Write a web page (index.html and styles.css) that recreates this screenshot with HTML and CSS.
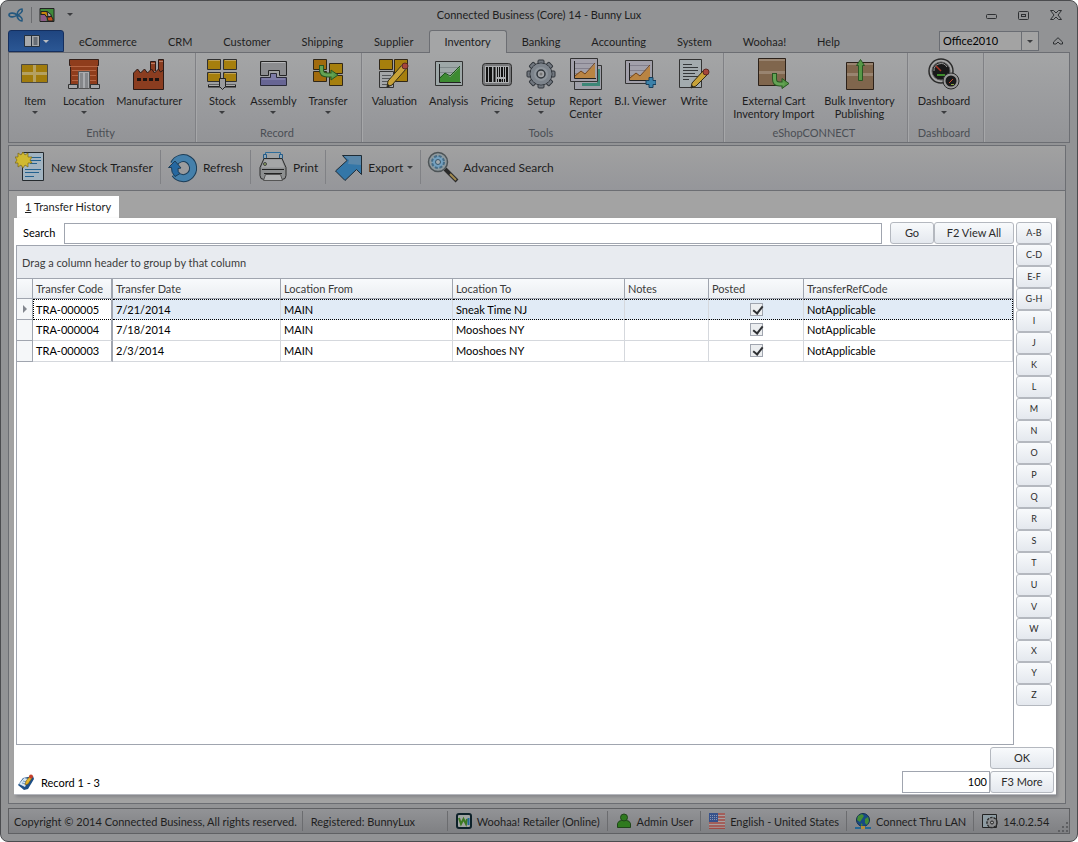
FILE: index.html
```html
<!DOCTYPE html>
<html lang="en">
<head>
<meta charset="UTF-8">
<meta name="viewport" content="width=device-width, initial-scale=1.0">
<title>Connected Business (Core) 14 - Bunny Lux</title>
<link rel="stylesheet" href="styles.css">
</head>
<body>
<div class="window">

  <!-- Title bar -->
  <header class="titlebar">
    <div class="quick">
      <svg class="logo" width="16" height="16" viewBox="0 0 16 16" fill="none" stroke="#24587f" stroke-width="1.6"><path d="M9 8C6 5 1 6 1 8s5 3 8 0zM9 8c0-4 3-6 5-6 1 2-1 5-5 6zM9 8c0 4 3 6 5 6 1-2-1-5-5-6z"/></svg>
      <span class="quick-sep"></span>
      <svg width="16" height="16" viewBox="0 0 16 16"><path fill="#3f8a3a" stroke="#222" d="M1 1.500h14v13H1z"/><path fill="#8a5a86" d="M1.500 8h6v6h-6z"/><path fill="#c8860a" stroke="#222" d="M2 4.500h6l2 5h-3l-1-2H2z"/><path fill="#c2521a" stroke="#222" d="M8 10h3V7l3 5v2H9z"/><path fill="#aaa" stroke="#222" d="M8 4.500l4 3v2H9z"/></svg>
      <span class="arrow"></span>
    </div>
    <h1>Connected Business (Core) 14 - Bunny Lux</h1>
    <div class="window-buttons">
      <button aria-label="Minimize"><svg width="12" height="12" viewBox="0 0 12 12"><rect x=".5" y="5.500" width="10" height="4" rx="1" fill="none" stroke="#2e3033"/></svg></button>
      <button aria-label="Restore"><svg width="12" height="12" viewBox="0 0 12 12" fill="none" stroke="#2e3033"><rect x=".5" y="2.500" width="10" height="8" rx="1"/><rect x="3.500" y="5.500" width="4" height="2"/></svg></button>
      <button aria-label="Close"><svg width="12" height="12" viewBox="0 0 12 12" fill="none" stroke="#2e3033"><path d="M.5 1.500h3L6 4l2.500-2.500h3L8 6l3.500 4.500h-3L6 8l-2.500 2.500h-3L4 6z"/></svg></button>
    </div>
  </header>

  <!-- Menu tabs -->
  <nav class="menu">
    <button class="file" aria-label="File">
      <svg width="16" height="12" viewBox="0 0 16 12"><path fill="#a8aaac" stroke="#26303c" d="M.5.500h15v11H.5z"/><path stroke="#26303c" d="M7.500 0v12M9.500 3h4M9.500 5h4M9.500 7h4M9.500 9h4"/></svg>
      <span class="arrow light"></span>
    </button>
    <a href="#">eCommerce</a>
    <a href="#">CRM</a>
    <a href="#">Customer</a>
    <a href="#">Shipping</a>
    <a href="#">Supplier</a>
    <a href="#" class="active">Inventory</a>
    <a href="#">Banking</a>
    <a href="#">Accounting</a>
    <a href="#">System</a>
    <a href="#">Woohaa!</a>
    <a href="#">Help</a>
    <div class="skin">
      <select aria-label="Skin"><option>Office2010</option></select>
      <span class="skin-arrow"><span class="arrow"></span></span>
    </div>
    <button class="collapse" aria-label="Collapse ribbon"><svg width="10" height="8" viewBox="0 0 10 8" fill="none" stroke="#2e3033"><path d="M.5 5L5 .7 9.500 5v2H7L5 5 3 7H.5z"/></svg></button>
  </nav>

  <!-- Ribbon -->
  <section class="ribbon">
    <div class="group">
      <div class="items">
        <button class="item">
          <svg width="32" height="32" viewBox="0 0 32 32"><path fill="#a17c0c" stroke="#4b4a45" d="M2.500 6.500h26v18h-26z"/><path stroke="#b4a162" stroke-width="3" d="M3 15.500h25M15.500 7v17"/></svg>
          <span>Item</span><i class="arrow"></i>
        </button>
        <button class="item">
          <svg width="32" height="32" viewBox="0 0 32 32"><path fill="#8f3d1c" stroke="#33201a" d="M1.500 1.500h29v6h-1v19h-27v-19h-1z"/><path stroke="#b66543" d="M2 8.500h28M4 12.500h24M4 17.500h24M4 22.500h24"/><path fill="#a9abae" stroke="#555" d="M10.500 30.500v-17h11v17z"/><path fill="#85878a" d="M12 15h3v15h-3zM17 15h3v15h-3z"/><path fill="#a5a6a8" stroke="#333" d="M.5 26.500h9v4h-9zM22.500 26.500h9v4h-9z"/></svg>
          <span>Location</span><i class="arrow"></i>
        </button>
        <button class="item">
          <svg width="32" height="32" viewBox="0 0 32 32"><path fill="#8b3d20" stroke="#2b1a16" d="M17.500 15V3.500h5V13M25.500 14V1.500h5V14"/><path stroke="#b77b62" d="M18 5.500h4M26 3.500h4"/><path fill="#8b3d20" stroke="#2b1a16" d="M.5 31.500V15l4-4 3 4 4-4 3 4 4-4 3 4 4-4 2 3 3-2v19.500z"/><path fill="#1c1310" d="M4 20h4v3H4zM10 20h4v3h-4zM16 20h4v3h-4zM22 20h4v3h-4z"/></svg>
          <span>Manufacturer</span>
        </button>
      </div>
      <h2>Entity</h2>
    </div>

    <div class="group">
      <div class="items">
        <button class="item">
          <svg width="32" height="32" viewBox="0 0 32 32"><path fill="#a67f0d" stroke="#303030" d="M1.500 1.500h13v10h-13zM17.500 1.500h13v10h-13zM1.500 14.500h13v9h-13zM17.500 14.500h13v9h-13z"/><path stroke="#c0a356" d="M3 2.500h11M19 2.500h11M3 15.500h11M19 15.500h11"/><path stroke="#202020" stroke-width="3" d="M2 28h28"/><path stroke="#aaa" d="M3 27.500h26"/><path fill="#999a9d" stroke="#222" d="M13.500 20.500h6v8l-3 3-3-3z"/></svg>
          <span>Stock</span><i class="arrow"></i>
        </button>
        <button class="item">
          <svg width="32" height="32" viewBox="0 0 32 32"><path fill="#8b8c8f" stroke="#242424" d="M3.500 3.500h26v14h-7v-5h-11v5h-8z"/><path stroke="#b6b7b9" d="M5 4.500h23"/><path fill="#676594" stroke="#292938" d="M3.500 19.500h10v-4h6v4h10v8h-26z"/><path fill="#7d7ba7" d="M5 20h9v-4h5v4h9v2H5z"/></svg>
          <span>Assembly</span><i class="arrow"></i>
        </button>
        <button class="item">
          <svg width="32" height="32" viewBox="0 0 32 32"><path fill="#a16b0d" stroke="#302718" d="M1.500 1.500h13v10h-13zM1.500 13.500h13v10h-13z"/><path fill="#a67f0d" stroke="#302718" d="M17.500 5.500h13v10h-13zM17.500 17.500h13v10h-13z"/><path fill="none" stroke="#285723" stroke-width="5" d="M9.500 7v5q0 5 6 5h5"/><path fill="#579847" stroke="#285723" d="M19 12l7 5-7 5z"/><path fill="none" stroke="#64a354" stroke-width="3" d="M9.500 8v4q0 5 6 5h6"/></svg>
          <span>Transfer</span><i class="arrow"></i>
        </button>
      </div>
      <h2>Record</h2>
    </div>

    <div class="group">
      <div class="items">
        <button class="item">
          <svg width="32" height="32" viewBox="0 0 32 32"><path fill="#a67f0d" stroke="#302718" d="M1.500 1.500h13v10h-13zM16.500 1.500h13v22h-13z"/><path fill="#a5a7a9" stroke="#333" d="M1.500 13.500h14v16h-14z"/><path stroke="#54575a" d="M4 17.500h9M4 20.500h9M4 23.500h6M4 26.500h5"/><path fill="#c8a238" stroke="#332c15" d="M10 23L24 7l4 4-14 16-5 2z"/><path fill="#888" d="M23 8l4 4 1-1-4-4z"/><circle cx="27" cy="8" r="3" fill="#a7463c" stroke="#5c2922"/><path fill="#222" d="M9 29l1-3 2 2z"/></svg>
          <span>Valuation</span>
        </button>
        <button class="item">
          <svg width="32" height="32" viewBox="0 0 32 32"><path fill="#9ea8a8" stroke="#333" d="M2.500 3.500h27v24h-27z"/><path stroke="#7f898a" d="M6 9.500h21M6 14.500h21M6 19.500h21"/><path fill="#3d8b32" d="M7 24v-5l5-4 5 4 10-10v15z"/><path fill="none" stroke="#1d571a" d="M7 20l5-5 5 3 10-10"/><path stroke="#222" fill="none" d="M6.500 6v18.500H28"/></svg>
          <span>Analysis</span>
        </button>
        <button class="item">
          <svg width="32" height="32" viewBox="0 0 32 32"><rect x="1.500" y="5.500" width="29" height="22" rx="3" fill="#77787a" stroke="#2c2c2c"/><path fill="#aeb0b2" d="M4 8h24v17H4z"/><path stroke="#111" stroke-width="2" d="M6 9v15M10 9v15M13.500 9v15M21 9v10M26 9v15"/><path stroke="#111" d="M8.500 9v15M16.500 9v10M18.500 9v10M23.500 9v10M16.500 21v3M18 21.500h2v2h-2M21.500 21v3M23.500 21v3"/></svg>
          <span>Pricing</span><i class="arrow"></i>
        </button>
        <button class="item">
          <svg width="32" height="32" viewBox="0 0 32 32"><g transform="translate(16 16)"><g fill="#71777f" stroke="#30353b"><rect x="-3" y="-14" width="6" height="28" rx="1"/><rect x="-3" y="-14" width="6" height="28" rx="1" transform="rotate(45)"/><rect x="-3" y="-14" width="6" height="28" rx="1" transform="rotate(90)"/><rect x="-3" y="-14" width="6" height="28" rx="1" transform="rotate(135)"/><circle r="11"/></g><circle r="10.500" fill="#7d848c"/><circle r="7" fill="#8d949b"/><circle r="4" fill="#a3a5a8" stroke="#30353b" stroke-width="1.500"/><circle r="1.500" fill="#777"/></g></svg>
          <span>Setup</span><i class="arrow"></i>
        </button>
        <button class="item">
          <svg width="32" height="32" viewBox="0 0 32 32"><path fill="#9fa0a9" stroke="#333" d="M4.500 7.500h27v24h-27z"/><path fill="#3d8778" d="M27 11h3v17H12v-3h15z"/><path fill="#a2a0aa" stroke="#333" d="M.5.500h27v23H.5z"/><path stroke="#827f8c" d="M4 5.500h21M4 10.500h21M4 15.500h21"/><path fill="#b98443" d="M5 20v-3l6-4 4 3L25 6v14z"/><path fill="none" stroke="#71441c" d="M5 18l6-5 4 3L25 5"/><path fill="none" stroke="#222" d="M4.500 3v17.500H26"/></svg>
          <span>Report<br>Center</span>
        </button>
        <button class="item">
          <svg width="32" height="32" viewBox="0 0 32 32"><path fill="#a2a0aa" stroke="#333" d="M1.500 2.500h27v23h-27z"/><path stroke="#827f8c" d="M5 7.500h21M5 12.500h21M5 17.500h21"/><path fill="#b98443" d="M6 22v-3l6-4 4 3L26 8v14z"/><path fill="none" stroke="#71441c" d="M6 20l6-5 4 3L26 7"/><path fill="none" stroke="#222" d="M5.500 5v17.500H27"/><path fill="#3c82aa" stroke="#183f5c" d="M25 19.500h4v3h3v4h-3v3h-4v-3h-3v-4h3z"/></svg>
          <span>B.I. Viewer</span>
        </button>
        <button class="item">
          <svg width="32" height="32" viewBox="0 0 32 32"><path fill="#a3abae" stroke="#333" d="M1.500 1.500h22v28h-22z"/><path stroke="#34383a" d="M5 6.500h9M5 9.500h15M5 12.500h15M5 15.500h12M5 18.500h15M5 21.500h6"/><path fill="#c8a238" stroke="#332c15" d="M14 25l11-12 4 4-11 11-5 2z"/><circle cx="28" cy="14" r="3" fill="#a7463c" stroke="#5c2922"/><path fill="#222" d="M13 30l1-3 2 2z"/></svg>
          <span>Write</span>
        </button>
      </div>
      <h2>Tools</h2>
    </div>

    <div class="group shop">
      <div class="items">
        <button class="item">
          <svg width="32" height="32" viewBox="0 0 32 32"><path fill="#80664d" stroke="#2c2119" d="M.5.500h27v27H.5z"/><path fill="#998470" d="M1 13h26v3H1zM1 1h26v2H1z"/><path fill="none" stroke="#285723" stroke-width="5" d="M16.500 15v6q0 5 5 5h4"/><path fill="#579847" stroke="#285723" d="M24 20.500l7 5-7 5z"/><path fill="none" stroke="#64a354" stroke-width="3" d="M16.500 16v5q0 5 5 5h5"/></svg>
          <span>External Cart<br>Inventory Import</span>
        </button>
        <button class="item">
          <svg width="32" height="32" viewBox="0 0 32 32"><path fill="#80664d" stroke="#2c2119" d="M2.500 4.500h27v27h-27z"/><path fill="#998470" d="M3 15h26v3H3zM3 5h26v2H3z"/><path fill="#579847" stroke="#285723" d="M16.500 1.500l4 6h-2v15h-4v-15h-2z"/></svg>
          <span>Bulk Inventory<br>Publishing</span>
        </button>
      </div>
      <h2>eShopCONNECT</h2>
    </div>

    <div class="group">
      <div class="items">
        <button class="item">
          <svg width="32" height="32" viewBox="0 0 32 32"><circle cx="13" cy="13" r="12" fill="#a5a5a5" stroke="#2b2b2b" stroke-width="1.500"/><circle cx="13" cy="13" r="9" fill="#191919" stroke="#555"/><path fill="none" stroke="#999" d="M6 13a7 7 0 0 1 13-4"/><path stroke="#a93424" stroke-width="1.500" d="M8 8l5 5"/><path stroke="#3e8c2b" stroke-width="2" d="M9 17h8"/><circle cx="23" cy="23" r="8" fill="#999" stroke="#2b2b2b"/><circle cx="23" cy="23" r="5.500" fill="#191919"/><path stroke="#c24b2d" d="M21 25l4-4"/><path stroke="#88a43e" d="M23 26.500h3"/></svg>
          <span>Dashboard</span><i class="arrow"></i>
        </button>
      </div>
      <h2>Dashboard</h2>
    </div>
  </section>

  <main class="workspace">
    <div class="toolbar">
      <button class="tool">
        <svg width="32" height="32" viewBox="0 0 32 32"><path fill="#a2b4c1" stroke="#252a2e" d="M7.500 1.500h21v28h-21z"/><path stroke="#22618f" d="M15 6.500h11M15 9.500h11M15 12.500h7M10 18.500h16M10 21.500h14M10 25.500h9"/><path fill="#d0b931" stroke="#7c6710" stroke-width=".7" d="M8 1l2 3 3-2v4l4 0-2 3 2 3-4 0v4l-3-2-2 3-2-3-3 2v-4l-3 0 2-3-2-3 3 0V2l3 2z"/></svg>
        New Stock Transfer
      </button>
      <button class="tool">
        <svg width="32" height="32" viewBox="0 0 32 32"><path fill="none" stroke="#1c3d58" stroke-width="8" d="M8 23A10 10 0 1 0 7 13"/><path fill="none" stroke="#4580ab" stroke-width="6" d="M8 23A10 10 0 1 0 7 13"/><path fill="#2668a0" stroke="#1c3d58" d="M1.500 16.500L8 10l6 7-3 .5q-.5 4 2 5l-5 3q-4-4-3.500-9z"/></svg>
        Refresh
      </button>
      <button class="tool">
        <svg width="32" height="32" viewBox="0 0 32 32"><path fill="#9fa3a6" stroke="#2e6d9b" d="M8.500 10V1.500h15V10z"/><path fill="#8fa5b4" stroke="#245b87" d="M6.500 3.500h3v4h-3zM22.500 3.500h3v4h-3z"/><path fill="#8d8f90" stroke="#2b2b2b" d="M7 7.500h18l4 9v8q0 4-4 4H7q-4 0-4-4v-8z"/><path fill="#a5a6a7" d="M7.500 8.500h17l3 8h-23z"/><circle cx="8" cy="13" r="1.500" fill="#8aa25e" stroke="#444"/><path stroke="#222" d="M5 18.500h22M7 22.500h18"/><path fill="#b0b1b2" stroke="#555" d="M8.500 23.500h15l2 6h-19z"/></svg>
        Print
      </button>
      <button class="tool">
        <svg width="32" height="32" viewBox="0 0 32 32"><path fill="#3477a8" stroke="#1f2c36" d="M10.500 4.500h19v19l-5-5L13 29.500 3.500 20 15 9.500z"/><path fill="#5a87a9" d="M12 5h17v9l-13-1 1-4z"/></svg>
        Export <i class="arrow"></i>
      </button>
      <button class="tool">
        <svg width="32" height="32" viewBox="0 0 32 32"><path stroke="#2b2b2b" stroke-width="4" d="M18 18l12 12"/><path stroke="#a18a50" stroke-width="2" d="M23 23l6 6"/><circle cx="11" cy="11" r="9.500" fill="#8e999e" stroke="#4d5457" stroke-width="1.500"/><circle cx="11" cy="11" r="6" fill="#73a0bf" stroke="#466c86" stroke-width="2" stroke-dasharray="3 1.700"/><circle cx="11" cy="11" r="2.500" fill="#a4acb0" stroke="#39566b"/></svg>
        Advanced Search
      </button>
    </div>

    <a href="#" class="page-tab"><u>1</u> Transfer History</a>

    <div class="page">
      <div class="list">
        <div class="search">
          <label for="search-input">Search</label>
          <input type="text" id="search-input">
          <button class="btn go">Go</button>
          <button class="btn view-all">F2 View All</button>
        </div>

        <div class="grid">
          <div class="group-by">Drag a column header to group by that column</div>
          <table>
            <colgroup>
              <col class="c-mark"><col class="c-code"><col class="c-date"><col class="c-from"><col class="c-to"><col class="c-notes"><col class="c-posted"><col>
            </colgroup>
            <thead>
              <tr><th></th><th>Transfer Code</th><th>Transfer Date</th><th>Location From</th><th>Location To</th><th>Notes</th><th>Posted</th><th>TransferRefCode</th></tr>
            </thead>
            <tbody>
              <tr class="selected"><td><span class="marker"></span></td><td>TRA-000005</td><td>7/21/2014</td><td>MAIN</td><td>Sneak Time NJ</td><td></td><td><input type="checkbox" aria-label="Posted" checked></td><td>NotApplicable</td></tr>
              <tr><td></td><td>TRA-000004</td><td>7/18/2014</td><td>MAIN</td><td>Mooshoes NY</td><td></td><td><input type="checkbox" aria-label="Posted" checked></td><td>NotApplicable</td></tr>
              <tr><td></td><td>TRA-000003</td><td>2/3/2014</td><td>MAIN</td><td>Mooshoes NY</td><td></td><td><input type="checkbox" aria-label="Posted" checked></td><td>NotApplicable</td></tr>
            </tbody>
          </table>
        </div>
      </div>

      <div class="letters">
        <button class="btn">A-B</button>
        <button class="btn">C-D</button>
        <button class="btn">E-F</button>
        <button class="btn">G-H</button>
        <button class="btn">I</button>
        <button class="btn">J</button>
        <button class="btn">K</button>
        <button class="btn">L</button>
        <button class="btn">M</button>
        <button class="btn">N</button>
        <button class="btn">O</button>
        <button class="btn">P</button>
        <button class="btn">Q</button>
        <button class="btn">R</button>
        <button class="btn">S</button>
        <button class="btn">T</button>
        <button class="btn">U</button>
        <button class="btn">V</button>
        <button class="btn">W</button>
        <button class="btn">X</button>
        <button class="btn">Y</button>
        <button class="btn">Z</button>
      </div>

      <div class="footer">
        <div class="record">
          <svg width="16" height="16" viewBox="0 0 16 16"><path fill="#1d4f86" d="M0 11l5-7 10-2 1 3-6 10-4 1z"/><path fill="#d7e7f4" d="M1 10l5-6 5 1-4 8z"/><path stroke="#6f9cc4" d="M4 9l4 1M5 7l4 1"/><path fill="#e5b52a" stroke="#6b541a" stroke-width=".6" d="M7 11l1-4 4-5 2 2-4 6z"/><circle cx="13" cy="2.500" r="2" fill="#c5402c"/></svg>
          <span>Record 1 - 3</span>
        </div>
        <div class="footer-actions">
          <button class="btn">OK</button>
          <div class="more">
            <input type="text" value="100" aria-label="Record count">
            <button class="btn">F3 More</button>
          </div>
        </div>
      </div>
    </div>
  </main>

  <!-- Status bar -->
  <footer class="status">
    <span class="cell copyright">Copyright © 2014 Connected Business, All rights reserved.</span>
    <span class="cell registered">Registered: BunnyLux</span>
    <span class="cell">
      <svg width="16" height="16" viewBox="0 0 16 16"><rect x="1" y="1" width="14" height="14" rx="2" fill="#a0a5a3" stroke="#0d2129" stroke-width="2"/><path fill="none" stroke="#3c7a22" stroke-width="2" d="M3 5l2 6 2.500-5L10 11l1-5"/><path stroke="#1f6a96" stroke-width="2" d="M12.500 5v7"/></svg>
      Woohaa! Retailer (Online)
    </span>
    <span class="cell">
      <svg width="16" height="16" viewBox="0 0 16 16" fill="#2f7a1e" stroke="#20451a"><path d="M1.500 14.500v-4q1-3 4-3h5q3 0 4 3v4z"/><circle cx="8" cy="4.500" r="3.500"/></svg>
      Admin User
    </span>
    <span class="cell">
      <svg width="16" height="16" viewBox="0 0 16 16"><path fill="#a5a0a0" d="M0 0h16v16H0z"/><path stroke="#a14a44" stroke-width="1.500" d="M0 1h16M0 4h16M0 7h16M0 10h16M0 13h16M0 15.500h16"/><path fill="#36518b" d="M0 0h9v9H0z"/><path stroke="#8995b3" stroke-dasharray="1 1" d="M1 2.500h7M1 4.500h7M1 6.500h7"/></svg>
      English - United States
    </span>
    <span class="cell">
      <svg width="16" height="16" viewBox="0 0 16 16"><circle cx="8" cy="7" r="6.500" fill="#174a85" stroke="#122f4e"/><path fill="#438c35" d="M3 3l4-2 2 2-2 3-2 3-3-2zM10 6l3-2 1 4-2 4-2-2zM6 10l2 2-2 1z"/><path stroke="#246795" stroke-width="2" d="M0 15h16"/><path fill="#b28c3e" d="M6 13h4v3H6z"/></svg>
      Connect Thru LAN
    </span>
    <span class="cell">
      <svg width="16" height="16" viewBox="0 0 16 16"><path fill="#8e9ca3" stroke="#222" d="M.5 1.500h14v13H.5z"/><circle cx="10" cy="9.500" r="5" fill="#8b8c8e" stroke="#2b2b2b" stroke-width="1.500" stroke-dasharray="2.500 1"/><circle cx="10" cy="9.500" r="4" fill="#8b8c8e"/><circle cx="10" cy="9.500" r="1.500" fill="#aaa" stroke="#222"/></svg>
      14.0.2.54
    </span>
    <svg class="grip" width="12" height="12" viewBox="0 0 12 12" fill="#5e5f62"><path d="M9 1h2v2H9zM9 5h2v2H9zM9 9h2v2H9zM5 5h2v2H5zM5 9h2v2H5zM1 9h2v2H1z"/></svg>
  </footer>
</div>
</body>
</html>
```
FILE: styles.css
```css
* {
  box-sizing: border-box;
}

body {
  margin: 0;
  background-color: #fff;
  font-family: Lato, "Liberation Sans", sans-serif;
  font-size: 11px;
  line-height: 13px;
  color: #1e1e1e;
}

a {
  color: inherit;
  text-decoration: none;
}

button,
input,
select {
  font: inherit;
  color: inherit;
  margin: 0;
}

button {
  background: none;
  border: none;
  padding: 0;
}

svg {
  display: block;
  flex: none;
}

.window {
  display: flex;
  flex-direction: column;
  min-height: 100vh;
  padding: 0 7px 7px;
  border: 1px solid #4b4c4f;
  border-radius: 8px;
  background-color: #929395;
}

.arrow {
  display: block;
  width: 0;
  height: 0;
  border: 3px solid transparent;
  border-top-color: #3b3c3f;
  border-bottom: none;
}

.arrow.light {
  border-top-color: #b9bcc0;
}

/* Title bar */
.titlebar {
  display: grid;
  grid-template-columns: 1fr auto 1fr;
  align-items: center;
  height: 29px;
  padding-bottom: 2px;
}

.titlebar h1 {
  margin: 0;
  font-size: 11px;
  font-weight: normal;
}

.quick {
  display: flex;
  align-items: center;
  gap: 7px;
}

.quick-sep {
  width: 1px;
  height: 16px;
  background-color: #6b6c6f;
}

.quick .arrow {
  margin-left: 5px;
}

.window-buttons {
  display: flex;
  justify-content: flex-end;
  gap: 20px;
  padding-right: 8px;
}

/* Menu tabs */
.menu {
  display: flex;
  height: 22px;
}

.menu a {
  padding: 4px 15px 0 14px;
  border: 1px solid transparent;
  border-bottom: none;
}

.menu a.active {
  position: relative;
  margin-bottom: -1px;
  border-color: #6c6e73;
  border-radius: 3px 3px 0 0;
  background-color: #a4a5a6;
}

.file {
  display: flex;
  align-items: center;
  justify-content: center;
  gap: 3px;
  width: 56px;
  border: 1px solid #152f5e;
  border-radius: 3px 3px 0 0;
  background: linear-gradient(#1f4580, #2b5794);
}

.skin {
  display: flex;
  width: 100px;
  height: 20px;
  margin: 1px 14px 0 auto;
  border: 1px solid #6a6d73;
  background-color: #a3a3a3;
}

.skin select {
  flex: 1;
  appearance: none;
  padding: 0 3px 1px;
  border: none;
  background: none;
  color: #000;
}

.skin-arrow {
  display: flex;
  align-items: center;
  padding: 0 5px;
  border-left: 1px solid #6a6d73;
}

.collapse {
  margin-right: 7px;
}

/* Ribbon */
.ribbon {
  display: flex;
  height: 91px;
  border: 1px solid #6c6e73;
  background: linear-gradient(#a4a5a6, #98999c 70%, #939497);
}

.group {
  display: flex;
  flex-direction: column;
  padding: 0 7px 0 4px;
  border-right: 1px solid #808185;
  box-shadow: 1px 0 #a6a7a9;
}

.items {
  display: flex;
  flex: 1;
}

.item {
  display: flex;
  flex-direction: column;
  align-items: center;
  min-width: 42px;
  padding: 5px 6px 0;
}

.shop .item {
  padding: 5px 5px 0;
}

.item span {
  margin-top: 4px;
}

.item .arrow {
  margin-top: 4px;
}

.group h2 {
  margin: 0 0 3px;
  font-size: 11px;
  font-weight: normal;
  text-align: center;
  color: #4a4e54;
}

/* Workspace */
.workspace {
  display: flex;
  flex-direction: column;
  align-items: stretch;
  flex: 1;
  margin: 2px 4px 0 0;
  padding-bottom: 8px;
  border: 1px solid #6c6e73;
  background-color: #a3a3a3;
}

.toolbar {
  display: flex;
  align-items: center;
  height: 45px;
  padding-bottom: 2px;
  border-bottom: 1px solid #6c6e73;
  background: linear-gradient(#a1a1a1, #95969a);
}

.tool {
  display: flex;
  align-items: center;
  gap: 4px;
  height: 34px;
  padding: 0 7px 0 6px;
  border-right: 1px solid #808185;
  font-size: 12px;
}

.tool:last-child {
  border-right: none;
}

.page-tab {
  align-self: flex-start;
  margin: 5px 0 0 8px;
  padding: 4px 8px 5px;
  background-color: #fff;
}

.page {
  display: grid;
  grid-template-columns: 1fr 36px;
  grid-template-rows: 1fr auto;
  flex: 1;
  column-gap: 2px;
  margin: 0 9px 0 5px;
  padding: 4px 4px 1px 2px;
  border-bottom: 1px solid #b5b7bd;
  background-color: #fff;
  box-shadow: 2px 2px 3px #85868a;
}

.btn {
  height: 22px;
  padding-bottom: 2px;
  border: 1px solid #b4b8bf;
  border-radius: 3px;
  background: linear-gradient(#f8fafc, #e4e8ee);
  color: #2b2b2b;
}

.list {
  display: flex;
  flex-direction: column;
  gap: 1px;
}

.search {
  display: flex;
  align-items: center;
}

.search label {
  width: 48px;
  padding: 0 0 2px 7px;
  color: #000;
}

.search input {
  flex: 1;
  height: 21px;
  margin-right: 8px;
  border: 1px solid #a0a5af;
}

.go {
  width: 44px;
}

.view-all {
  width: 80px;
}

.letters {
  display: flex;
  flex-direction: column;
}

.letters .btn {
  font-size: 9px;
}

/* Transfer grid */
.grid {
  flex: 1;
  border: 1px solid #a0a5af;
}

.group-by {
  padding: 10px 5px 9px;
  background-color: #e8ebf0;
  color: #3c3c3c;
}

table {
  width: 100%;
  table-layout: fixed;
  border-collapse: separate;
  border-spacing: 0;
  color: #000;
}

.c-mark { width: 16px; }
.c-code { width: 80px; }
.c-date { width: 168px; }
.c-from { width: 172px; }
.c-to { width: 172px; }
.c-notes { width: 84px; }
.c-posted { width: 95px; }

th,
td {
  height: 21px;
  padding: 0 3px 1px;
  text-align: left;
  white-space: nowrap;
}

th {
  border: 1px solid #a0a5af;
  border-left: none;
  background: linear-gradient(#f8fafc, #ebeef2);
  color: #3c3c3c;
  font-weight: normal;
}

td {
  border-right: 1px solid #d5d8dd;
  border-bottom: 1px solid #d5d8dd;
}

td:first-child {
  border-color: #a0a5af;
  background-color: #f5f7f9;
}

th:nth-child(2),
td:nth-child(2) {
  border-right: 2px solid #a0a5af;
}

.selected td:nth-child(n + 2) {
  border-top: 1px dotted #000;
  border-bottom: 1px dotted #000;
  background-color: #e1ebf6;
}

.selected td:nth-child(2) {
  padding-left: 2px;
  border-left: 1px dotted #000;
  background-color: #fff;
}

.selected td:last-child {
  border-right: 1px dotted #000;
}

.marker {
  display: block;
  width: 0;
  margin-left: 3px;
  border: 4px solid transparent;
  border-left-color: #83878f;
  border-right: none;
}

td input {
  appearance: none;
  display: block;
  width: 13px;
  height: 13px;
  margin: 0 auto;
  border: 1px solid #a0a5af;
  background-color: #eceef0;
}

td input:checked::before {
  content: "";
  display: block;
  width: 4px;
  height: 8px;
  margin: 0 0 0 4px;
  border: solid #2e3033;
  border-width: 0 2px 2px 0;
  transform: rotate(38deg);
}

/* Page footer */
.footer {
  grid-column: 1 / 3;
  display: flex;
  justify-content: space-between;
  align-items: flex-end;
  margin: 2px -2px 0 0;
}

.record {
  display: flex;
  align-items: center;
  gap: 7px;
  padding: 0 0 3px 2px;
  color: #000;
}

.footer-actions {
  display: flex;
  flex-direction: column;
  align-items: flex-end;
  gap: 2px;
}

.footer-actions .btn {
  width: 64px;
}

.more {
  display: flex;
}

.more input {
  width: 88px;
  height: 22px;
  padding: 0 2px 2px;
  border: 1px solid #a0a5af;
  text-align: right;
  color: #000;
}

/* Status bar */
.status {
  display: flex;
  align-items: center;
  height: 26px;
  margin-top: 4px;
  border: 1px solid #5f6063;
  background: linear-gradient(#929396, #7f8083);
}

.cell {
  display: flex;
  align-items: center;
  gap: 5px;
  height: 20px;
  padding: 0 7px 0 8px;
  border-right: 1px solid #6b6c6f;
  white-space: nowrap;
}

.cell:nth-child(7) {
  border-right: none;
}

.copyright {
  padding: 0 5px;
}

.registered {
  width: 145px;
}

.grip {
  align-self: flex-end;
  margin-left: auto;
}
```
